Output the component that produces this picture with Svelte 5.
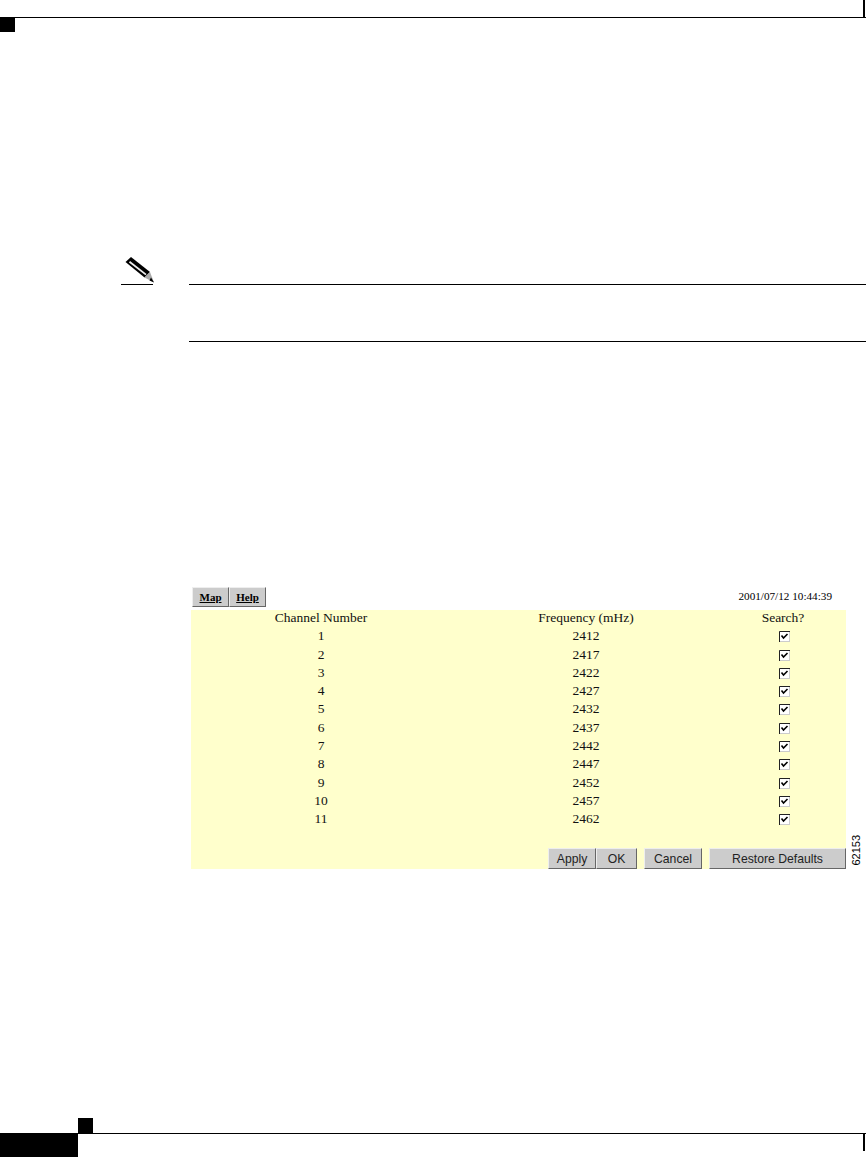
<script lang="ts">
  const channels = [
    [1, 2412], [2, 2417], [3, 2422], [4, 2427], [5, 2432], [6, 2437],
    [7, 2442], [8, 2447], [9, 2452], [10, 2457], [11, 2462]
  ];
</script>

<div class="page">
  <header class="top">
    <div class="top-rule"><span class="top-tick"></span></div>
    <div class="top-square"></div>
  </header>

  <section class="note">
    <div class="note-side">
      <svg class="pencil" width="30" height="26" viewBox="0 0 30 26">
        <path d="M0.5 5 L6 0 L25 15 L19.5 20.5 Z" fill="#000" />
        <path d="M4.5 4.8 L21 17.6" stroke="#eee" stroke-width="1.8" fill="none" />
        <path d="M25 15 L19.5 20.5 L29 25.5 Z" fill="#aaa" />
        <path d="M26 20.5 L24.5 23.5 L29 25.5 Z" fill="#000" />
      </svg>
      <div class="note-rule"></div>
    </div>
    <div class="note-body"></div>
  </section>

  <section class="figure">
    <div class="shot">
      <div class="shot-top">
        <div class="tabs">
          <button class="tab">Map</button>
          <button class="tab">Help</button>
        </div>
        <span class="stamp">2001/07/12 10:44:39</span>
      </div>
      <div class="panel">
        <div class="row">
          <span>Channel Number</span>
          <span>Frequency (mHz)</span>
          <span>Search?</span>
        </div>
        {#each channels as [num, freq]}
          <div class="row">
            <span>{num}</span>
            <span>{freq}</span>
            <span class="box">
              <svg width="11" height="11" viewBox="0 0 11 11">
                <rect width="11" height="11" fill="#ccc" />
                <path d="M0.5 11 V0.5 H11" stroke="#222" fill="none" />
                <rect x="1" y="1" width="9" height="9" fill="#fff" />
                <path d="M2.5 4.5 L4.5 7 L8.5 3" stroke="#000" stroke-width="1.6" fill="none" />
              </svg>
            </span>
          </div>
        {/each}
        <div class="actions">
          <div class="group">
            <button class="act apply">Apply</button>
            <button class="act ok">OK</button>
          </div>
          <button class="act cancel">Cancel</button>
          <button class="act restore">Restore Defaults</button>
        </div>
      </div>
    </div>
    <span class="fig-id">62153</span>
  </section>

  <footer class="bottom">
    <div class="bottom-square"></div>
    <div class="bottom-bar">
      <div class="bottom-block"></div>
      <div class="bottom-rule"><span class="bottom-tick"></span></div>
    </div>
  </footer>
</div>

<style>
  :global(body) {
    background: #fff;
  }

  .page {
    width: 866px;
    height: 1157px;
    display: flex;
    flex-direction: column;
    overflow: hidden;
    background: #fff;
    color: #000;
    font-family: "Liberation Serif", serif;
  }

  .top {
    height: 32px;
    flex: none;
  }

  .top-rule {
    height: 17px;
    margin-left: 15px;
    border-bottom: 1px solid #000;
    box-sizing: content-box;
    display: flex;
    justify-content: flex-end;
    padding-right: 1px;
  }

  .top-tick {
    width: 2px;
    height: 17px;
    background: #000;
  }

  .top-square {
    width: 15px;
    height: 15px;
    margin-top: -1px;
    background: #000;
  }

  .note {
    flex: none;
    display: flex;
    margin-top: 225px;
    height: 85px;
  }

  .note-side {
    width: 32px;
    margin-left: 121px;
    height: 28px;
    display: flex;
    flex-direction: column;
    justify-content: flex-end;
  }

  .pencil {
    margin-left: 4px;
    display: block;
    flex: none;
  }

  .note-rule {
    height: 1px;
    margin-top: 1px;
    background: #000;
  }

  .note-body {
    width: 677px;
    margin-left: 36px;
    margin-top: 27px;
    height: 56px;
    border-top: 1px solid #000;
    border-bottom: 1px solid #000;
  }

  .figure {
    flex: none;
    display: flex;
    align-items: flex-end;
    margin-top: 245px;
    margin-left: 191px;
  }

  .shot {
    width: 655px;
  }

  .shot-top {
    height: 23px;
    display: flex;
    justify-content: space-between;
    align-items: flex-start;
  }

  .tabs {
    display: flex;
    margin-left: 1px;
  }

  button {
    margin: 0;
    padding: 0;
    background: #ccc;
    color: #000;
    border: 1px solid;
    border-color: #eee #666 #666 #eee;
    cursor: pointer;
  }

  .tab {
    width: 37px;
    height: 20px;
    font-family: "Liberation Serif", serif;
    font-size: 11px;
    font-weight: bold;
    text-decoration: underline;
  }

  .stamp {
    font-size: 11.2px;
    line-height: 19px;
    margin-right: 14px;
  }

  .panel {
    height: 259px;
    background: #ffc;
    display: flex;
    flex-direction: column;
  }

  .row {
    display: grid;
    grid-template-columns: 260px 270px 124px;
    height: 18.3px;
    line-height: 16.5px;
    font-size: 13.5px;
    text-align: center;
    color: #111;
  }

  .box {
    display: flex;
    align-items: flex-start;
    justify-content: center;
    padding: 3px 0 0 3px;
    height: 11px;
  }

  .actions {
    margin-top: auto;
    display: flex;
    justify-content: flex-end;
    gap: 7px;
  }

  .group {
    display: flex;
  }

  .act {
    height: 21px;
    font-family: "Liberation Sans", sans-serif;
    font-size: 12.2px;
    color: #222;
  }

  .apply { width: 48px; }
  .ok { width: 41px; }
  .cancel { width: 58px; }
  .restore { width: 137px; }

  .fig-id {
    writing-mode: vertical-rl;
    transform: rotate(180deg);
    font-family: "Liberation Sans", sans-serif;
    font-size: 11px;
    margin-left: 5px;
    margin-bottom: 3px;
    line-height: 11px;
  }

  .bottom {
    margin-top: auto;
    flex: none;
    height: 39px;
  }

  .bottom-square {
    width: 15px;
    height: 15px;
    margin-left: 78px;
    background: #000;
  }

  .bottom-bar {
    display: flex;
    height: 24px;
  }

  .bottom-block {
    width: 78px;
    background: #000;
  }

  .bottom-rule {
    flex: 1;
    height: 17px;
    border-top: 1px solid #000;
    display: flex;
    justify-content: flex-end;
    padding-right: 1px;
  }

  .bottom-tick {
    width: 2px;
    height: 17px;
    background: #000;
  }
</style>
